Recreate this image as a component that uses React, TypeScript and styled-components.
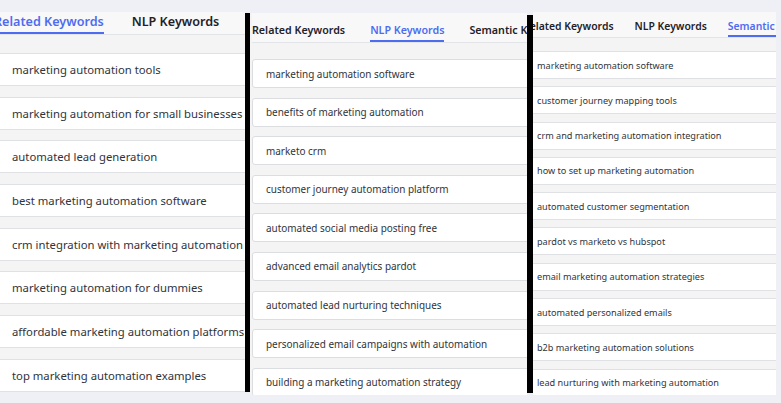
import React from "react";
import styled, { createGlobalStyle } from "styled-components";

const GlobalStyle = createGlobalStyle`
    html, body {
        margin: 0;
        padding: 0;
        background: #eef0f5;
        font-family: "Noto Sans", "Open Sans", sans-serif;
    }
`;

interface IPanelLook {
    width: number;
    height: number;
    top: number;
    pad: number;
    tabHeight: number;
    tabFont: number;
    tabGap: number;
    tabPad: number;
    shift: number;
    listTop: number;
    rowHeight: number;
    rowGap: number;
    rowFont: number;
    rowPad: number;
    card?: boolean;
}

const Page = styled.div`
    display: flex;
    align-items: flex-start;
    width: 781px;
    height: 403px;
    overflow: hidden;
`;

const Panel = styled.div<{ $look: IPanelLook }>`
    flex: none;
    width: ${({ $look }) => $look.width}px;
    height: ${({ $look }) => $look.height}px;
    margin-top: ${({ $look }) => $look.top}px;
    padding-left: ${({ $look }) => $look.pad}px;
    box-sizing: border-box;
    background: #f4f4f5;
    overflow: hidden;
`;

const Tabs = styled.div<{ $look: IPanelLook }>`
    display: flex;
    gap: ${({ $look }) => $look.tabGap}px;
    height: ${({ $look }) => $look.tabHeight}px;
    margin-left: ${({ $look }) => $look.shift}px;
    margin-right: -200px;
    border-bottom: 1px solid #e3e4e8;
    background: #f8f8f9;
`;

const Tab = styled.div<{ $active?: boolean; $look: IPanelLook }>`
    flex: none;
    display: flex;
    align-items: flex-end;
    box-sizing: border-box;
    padding-bottom: ${({ $look }) => $look.tabPad}px;
    font-size: ${({ $look }) => $look.tabFont}px;
    line-height: 1;
    font-weight: 600;
    white-space: nowrap;
    color: ${({ $active }) => ($active ? "#4e6cf0" : "#1f2229")};
    border-bottom: 2px solid ${({ $active }) => ($active ? "#4e6cf0" : "transparent")};
`;

const List = styled.div<{ $look: IPanelLook }>`
    display: flex;
    flex-direction: column;
    gap: ${({ $look }) => $look.rowGap}px;
    padding-top: ${({ $look }) => $look.listTop}px;
`;

const Row = styled.div<{ $look: IPanelLook }>`
    flex: none;
    display: flex;
    align-items: center;
    box-sizing: border-box;
    height: ${({ $look }) => $look.rowHeight}px;
    padding-left: ${({ $look }) => $look.rowPad}px;
    font-size: ${({ $look }) => $look.rowFont}px;
    white-space: nowrap;
    color: #30343b;
    background: #ffffff;

    ${({ $look }) => $look.card ? `
        border: 1px solid #dcdde0;
        border-radius: 3px;
        margin-right: -6px;
    ` : `
        border-top: 1px solid #e0e1e4;
        border-bottom: 1px solid #e0e1e4;
    `}
`;

const Divider = styled.div<{ $top: number; $height: number; $width: number }>`
    flex: none;
    width: ${({ $width }) => $width}px;
    height: ${({ $height }) => $height}px;
    margin-top: ${({ $top }) => $top}px;
    background: #000000;
`;

const first: IPanelLook = {
    width: 245, height: 380, top: 12, pad: 0,
    tabHeight: 22, tabFont: 12.6, tabGap: 28, tabPad: 3.5, shift: -6,
    listTop: 18, rowHeight: 33, rowGap: 10.7, rowFont: 11.3, rowPad: 12,
};

const second: IPanelLook = {
    width: 277, height: 382, top: 13, pad: 2,
    tabHeight: 29, tabFont: 10.7, tabGap: 25, tabPad: 4.5, shift: 0,
    listTop: 16, rowHeight: 29, rowGap: 9.6, rowFont: 9.95, rowPad: 13, card: true,
};

const third: IPanelLook = {
    width: 243, height: 383, top: 12, pad: 0,
    tabHeight: 25, tabFont: 10.4, tabGap: 21, tabPad: 3.2, shift: -10,
    listTop: 13, rowHeight: 28, rowGap: 7.3, rowFont: 9.15, rowPad: 4,
};

const panels = [
    {
        look: first,
        active: 0,
        tabs: ["Related Keywords", "NLP Keywords"],
        items: [
            "marketing automation tools",
            "marketing automation for small businesses",
            "automated lead generation",
            "best marketing automation software",
            "crm integration with marketing automation",
            "marketing automation for dummies",
            "affordable marketing automation platforms",
            "top marketing automation examples",
        ],
    },
    {
        look: second,
        active: 1,
        tabs: ["Related Keywords", "NLP Keywords", "Semantic Keywords"],
        items: [
            "marketing automation software",
            "benefits of marketing automation",
            "marketo crm",
            "customer journey automation platform",
            "automated social media posting free",
            "advanced email analytics pardot",
            "automated lead nurturing techniques",
            "personalized email campaigns with automation",
            "building a marketing automation strategy",
        ],
    },
    {
        look: third,
        active: 2,
        tabs: ["Related Keywords", "NLP Keywords", "Semantic Keywords"],
        items: [
            "marketing automation software",
            "customer journey mapping tools",
            "crm and marketing automation integration",
            "how to set up marketing automation",
            "automated customer segmentation",
            "pardot vs marketo vs hubspot",
            "email marketing automation strategies",
            "automated personalized emails",
            "b2b marketing automation solutions",
            "lead nurturing with marketing automation",
        ],
    },
];

const dividers = [
    { top: 13, height: 379, width: 5 },
    { top: 15, height: 378, width: 6 },
];

const KeywordPanel: React.FC<{ data: typeof panels[number] }> = ({ data }) => (
    <Panel $look={data.look}>
        <Tabs $look={data.look}>
            {data.tabs.map((tab, i) => (
                <Tab key={tab} $look={data.look} $active={i === data.active}>
                    {tab}
                </Tab>
            ))}
        </Tabs>
        <List $look={data.look}>
            {data.items.map((item) => (
                <Row key={item} $look={data.look}>{item}</Row>
            ))}
        </List>
    </Panel>
);

const App: React.FC = () => {
    return (
        <>
            <GlobalStyle />
            <Page>
                <KeywordPanel data={panels[0]} />
                <Divider $top={dividers[0].top} $height={dividers[0].height} $width={dividers[0].width} />
                <KeywordPanel data={panels[1]} />
                <Divider $top={dividers[1].top} $height={dividers[1].height} $width={dividers[1].width} />
                <KeywordPanel data={panels[2]} />
            </Page>
        </>
    );
};

export default App;
